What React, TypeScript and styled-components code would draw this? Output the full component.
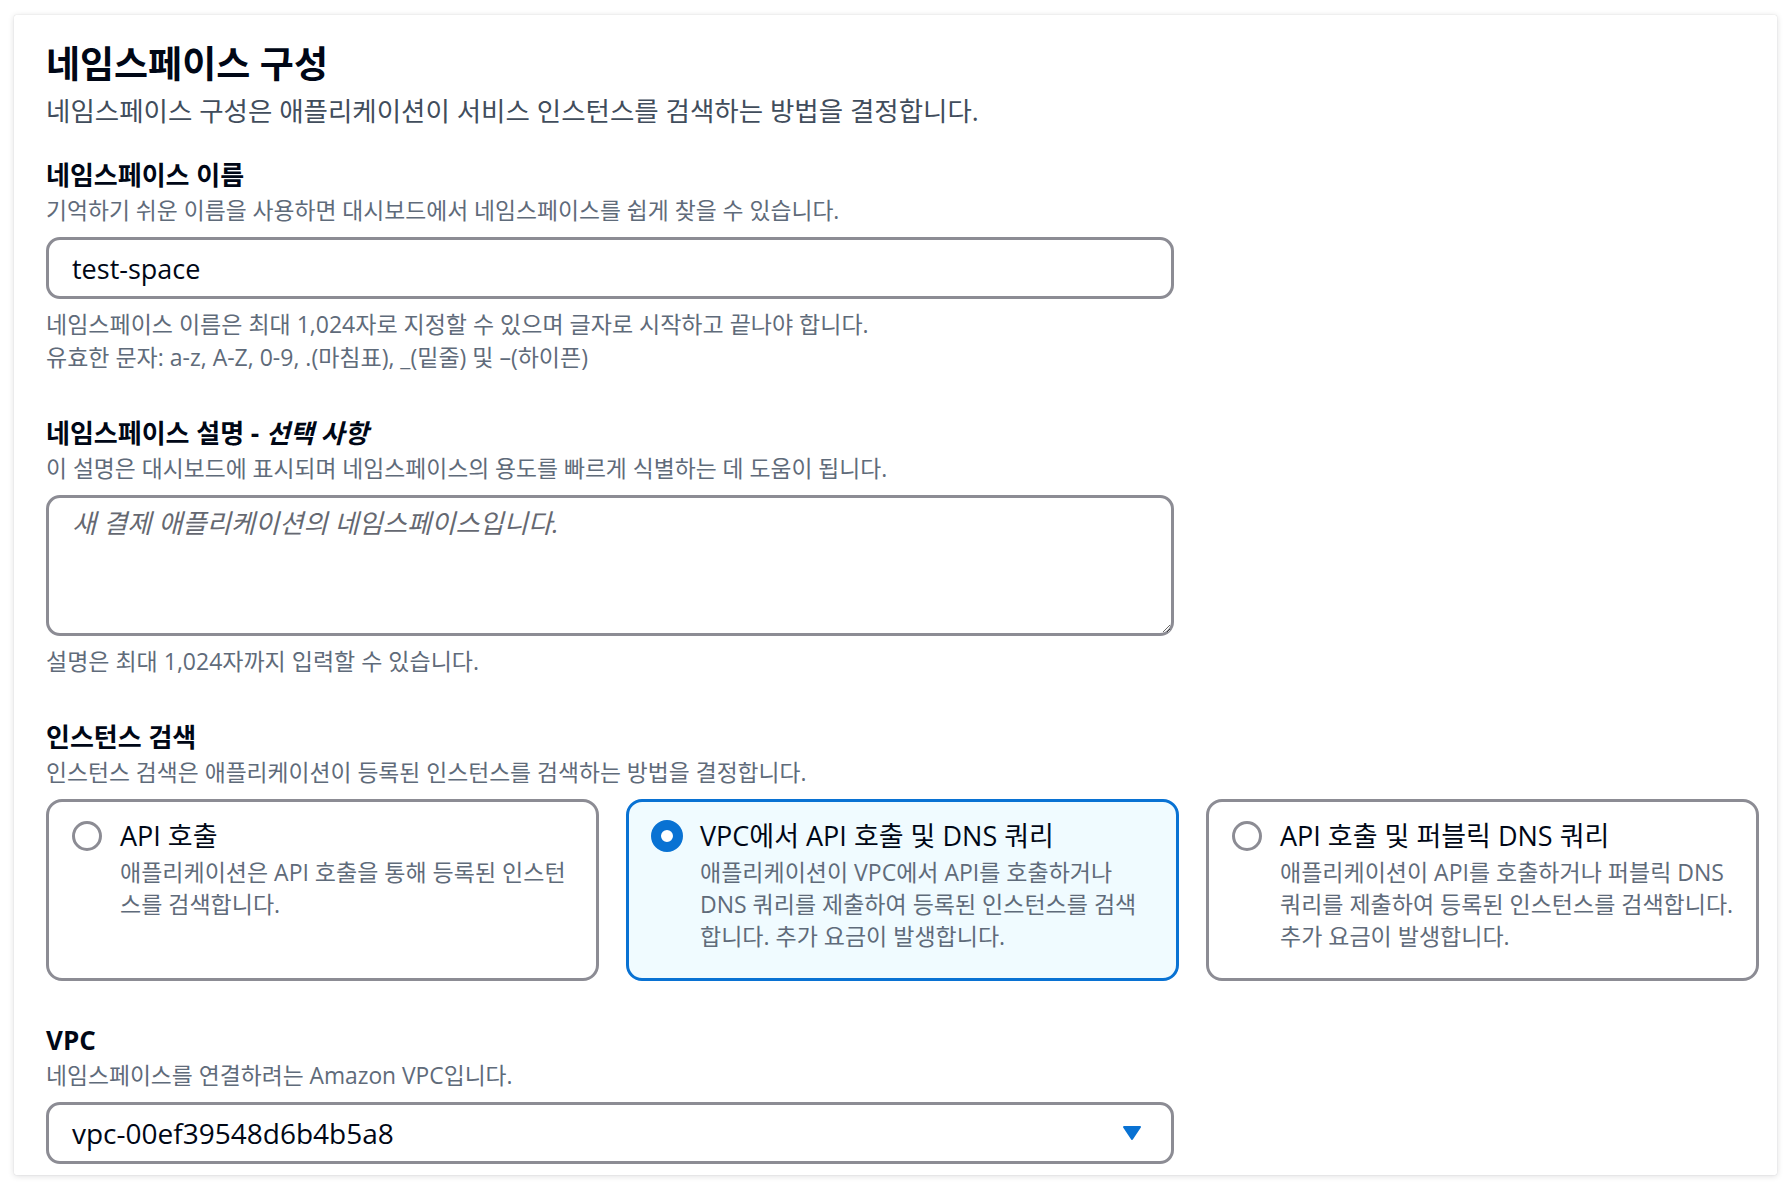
import styled, { createGlobalStyle } from 'styled-components'

const GlobalStyle = createGlobalStyle`
  html, body {
    margin: 0;
    padding: 0;
    background: #ffffff;
  }
  body {
    font-family: "Open Sans", "Noto Sans CJK KR", sans-serif;
    color: #000716;
  }
  * {
    box-sizing: border-box;
  }
`

const Page = styled.div`
  padding: 15px 15px 15px 14px;
`

const Card = styled.section`
  width: 1763px;
  background: #ffffff;
  border-radius: 2px;
  box-shadow: 0 1px 6px rgba(0, 7, 22, 0.14), 0 0 1px rgba(0, 7, 22, 0.2);
  padding: 27px 32px 11px 32px;
  display: flex;
  flex-direction: column;
`

const Header = styled.header`
  display: flex;
  flex-direction: column;
  gap: 9px;
  margin-bottom: 32px;
`

const Title = styled.h2`
  margin: 0;
  font-size: 37px;
  line-height: 44px;
  font-weight: 700;
  color: #000716;
`

const HeaderDesc = styled.p`
  margin: 0;
  font-size: 26.5px;
  line-height: 32px;
  color: #414d5c;
`

const Fields = styled.div`
  display: flex;
  flex-direction: column;
  gap: 43px;
`

const Field = styled.div`
  display: flex;
  flex-direction: column;
`

const Label = styled.label`
  font-size: 26px;
  line-height: 32px;
  font-weight: 700;
  color: #000716;

  i {
    font-style: italic;
  }
`

const Description = styled.div`
  margin-top: 6px;
  font-size: 22.8px;
  line-height: 28px;
  color: #5f6b7a;
`

const Control = styled.div`
  margin-top: 12px;
`

const Constraint = styled.div`
  margin-top: 9px;
  font-size: 23px;
  line-height: 33px;
  color: #5f6b7a;
`

const TextInput = styled.input`
  display: block;
  width: 1128px;
  height: 62px;
  border: 3.5px solid #8c8c94;
  border-radius: 14px;
  padding: 0 23px;
  font-family: inherit;
  font-size: 27px;
  color: #000716;
  background: #ffffff;
  outline: none;
`

const TextArea = styled.textarea`
  display: block;
  width: 1128px;
  height: 141px;
  border: 3.5px solid #8c8c94;
  border-radius: 14px;
  padding: 9px 23px;
  font-family: inherit;
  font-size: 26.3px;
  line-height: 32px;
  color: #000716;
  background: #ffffff;
  outline: none;
  resize: vertical;

  &::placeholder {
    font-style: italic;
    color: #656871;
  }
`

const Tiles = styled.div`
  display: grid;
  grid-template-columns: repeat(3, 553px);
  gap: 27px;
`

const Tile = styled.div<{ selected?: boolean }>`
  min-height: 182px;
  display: flex;
  align-items: flex-start;
  gap: 18px;
  padding: 18px 23px;
  border: 3.5px solid ${(p) => (p.selected ? '#0972d3' : '#8c8c94')};
  border-radius: 16px;
  background: ${(p) => (p.selected ? '#f0fbff' : '#ffffff')};
`

const Radio = styled.span<{ checked?: boolean }>`
  flex: none;
  width: ${(p) => (p.checked ? '32px' : '30px')};
  height: ${(p) => (p.checked ? '32px' : '30px')};
  margin-top: ${(p) => (p.checked ? '0' : '1px')};
  margin-left: ${(p) => (p.checked ? '-1px' : '0')};
  margin-right: ${(p) => (p.checked ? '-1px' : '0')};
  border-radius: 50%;
  border: ${(p) => (p.checked ? '10px solid #0972d3' : '3.5px solid #8c8c94')};
  background: #ffffff;
`

const TileText = styled.div`
  display: flex;
  flex-direction: column;
  gap: 4px;
`

const TileLabel = styled.div`
  font-size: 27px;
  line-height: 32px;
  color: #000716;
`

const TileDesc = styled.div`
  font-size: 23px;
  line-height: 32px;
  color: #5f6b7a;
`

const DescLine = styled.span`
  display: block;
  white-space: nowrap;
`

const Select = styled.div`
  width: 1128px;
  height: 62px;
  border: 3.5px solid #8c8c94;
  border-radius: 14px;
  padding: 0 29px 0 23px;
  display: flex;
  align-items: center;
  justify-content: space-between;
  font-size: 28px;
  color: #000716;
`

const tiles = [
  {
    label: 'API 호출',
    lines: ['애플리케이션은 API 호출을 통해 등록된 인스턴', '스를 검색합니다.'],
    selected: false
  },
  {
    label: 'VPC에서 API 호출 및 DNS 쿼리',
    lines: [
      '애플리케이션이 VPC에서 API를 호출하거나',
      'DNS 쿼리를 제출하여 등록된 인스턴스를 검색',
      '합니다. 추가 요금이 발생합니다.'
    ],
    selected: true
  },
  {
    label: 'API 호출 및 퍼블릭 DNS 쿼리',
    lines: [
      '애플리케이션이 API를 호출하거나 퍼블릭 DNS',
      '쿼리를 제출하여 등록된 인스턴스를 검색합니다.',
      '추가 요금이 발생합니다.'
    ],
    selected: false
  }
]

function CaretDown () {
  return (
    <svg width='20' height='16' viewBox='0 0 20 16'>
      <path d='M2 2 H18 L10 14 Z' fill='#0972d3' stroke='#0972d3' strokeWidth='2' strokeLinejoin='round' />
    </svg>
  )
}

export default function App () {
  return (
    <Page>
      <GlobalStyle />
      <Card>
        <Header>
          <Title>네임스페이스 구성</Title>
          <HeaderDesc>네임스페이스 구성은 애플리케이션이 서비스 인스턴스를 검색하는 방법을 결정합니다.</HeaderDesc>
        </Header>

        <Fields>
          <Field>
            <Label>네임스페이스 이름</Label>
            <Description>기억하기 쉬운 이름을 사용하면 대시보드에서 네임스페이스를 쉽게 찾을 수 있습니다.</Description>
            <Control>
              <TextInput value='test-space' readOnly />
            </Control>
            <Constraint>
              네임스페이스 이름은 최대 1,024자로 지정할 수 있으며 글자로 시작하고 끝나야 합니다.
              <br />
              유효한 문자: a-z, A-Z, 0-9, .(마침표), _(밑줄) 및 –(하이픈)
            </Constraint>
          </Field>

          <Field>
            <Label>네임스페이스 설명 - <i>선택 사항</i></Label>
            <Description>이 설명은 대시보드에 표시되며 네임스페이스의 용도를 빠르게 식별하는 데 도움이 됩니다.</Description>
            <Control>
              <TextArea placeholder='새 결제 애플리케이션의 네임스페이스입니다.' />
            </Control>
            <Constraint>설명은 최대 1,024자까지 입력할 수 있습니다.</Constraint>
          </Field>

          <Field>
            <Label>인스턴스 검색</Label>
            <Description>인스턴스 검색은 애플리케이션이 등록된 인스턴스를 검색하는 방법을 결정합니다.</Description>
            <Control>
              <Tiles>
                {tiles.map((t) => (
                  <Tile key={t.label} selected={t.selected}>
                    <Radio checked={t.selected} />
                    <TileText>
                      <TileLabel>{t.label}</TileLabel>
                      <TileDesc>
                        {t.lines.map((line) => (
                          <DescLine key={line}>{line}</DescLine>
                        ))}
                      </TileDesc>
                    </TileText>
                  </Tile>
                ))}
              </Tiles>
            </Control>
          </Field>

          <Field>
            <Label>VPC</Label>
            <Description>네임스페이스를 연결하려는 Amazon VPC입니다.</Description>
            <Control>
              <Select>
                <span>vpc-00ef39548d6b4b5a8</span>
                <CaretDown />
              </Select>
            </Control>
          </Field>
        </Fields>
      </Card>
    </Page>
  )
}
